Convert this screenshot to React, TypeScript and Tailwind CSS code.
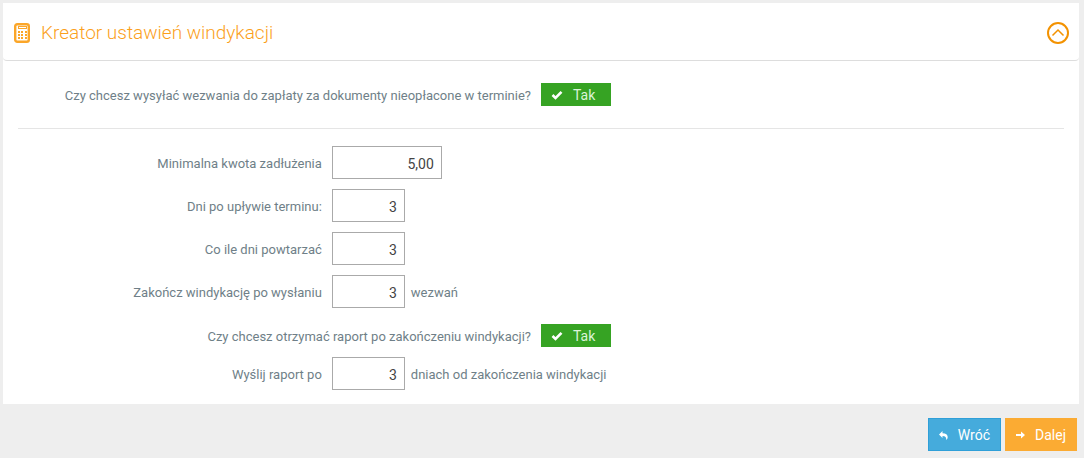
import { useState } from 'react'
import type { ReactNode } from 'react'

const numberFields = [
  { id: 'min-amount', label: 'Minimalna kwota zadłużenia', value: '5,00', wide: true },
  { id: 'days-after', label: 'Dni po upływie terminu:', value: '3' },
  { id: 'repeat-days', label: 'Co ile dni powtarzać', value: '3' },
  { id: 'finish-after', label: 'Zakończ windykację po wysłaniu', value: '3', suffix: 'wezwań' },
]

function CalculatorIcon() {
  return (
    <svg width="16" height="20" viewBox="0 0 16 20" aria-hidden="true" className="shrink-0">
      <rect x="1.2" y="1.2" width="13.6" height="17.6" rx="2" fill="#fff" stroke="#fba629" strokeWidth="2.4" />
      <rect x="4.5" y="3.5" width="8" height="2" fill="none" stroke="#fba629" />
      <g fill="#fba629">
        {[8, 11, 14].map((y) =>
          [4, 7, 11].map((x) => <rect key={`${x}-${y}`} x={x} y={y} width="2" height="2" />)
        )}
      </g>
    </svg>
  )
}

function Toggle({ id }: { id: string }) {
  const [on, setOn] = useState(true)

  return (
    <label className="relative flex h-[23px] w-[70px] cursor-pointer items-center gap-2.5 bg-[#36a323] pt-px pl-2.5 text-sm text-[#dcf3d8]">
      <input
        id={id}
        type="checkbox"
        checked={on}
        onChange={() => setOn(!on)}
        className="absolute inset-0 cursor-pointer opacity-0"
      />
      <svg width="12" height="10" viewBox="0 0 12 10" aria-hidden="true">
        <path d="M1.5 5 4.5 8 10.5 1.8" fill="none" stroke="#fff" strokeWidth="2.6" />
      </svg>
      <span>{on ? 'Tak' : 'Nie'}</span>
    </label>
  )
}

function ToggleRow({ id, children }: { id: string; children: ReactNode }) {
  return (
    <div className="flex items-center">
      <label htmlFor={id} className="w-1/2 pt-0.5 pr-2.5 text-right">
        {children}
      </label>
      <Toggle id={id} />
    </div>
  )
}

type NumberRowProps = { id: string; label: string; value: string; suffix?: string; wide?: boolean }

function NumberRow({ id, label, value, suffix, wide }: NumberRowProps) {
  return (
    <div className="flex items-center">
      <label htmlFor={id} className="w-[30%] pt-0.5 pr-2.5 text-right">
        {label}
      </label>
      <input
        id={id}
        type="text"
        defaultValue={value}
        className={`h-[33px] border border-[#aaa] bg-white px-[7px] pt-0.5 text-right text-sm text-[#444] ${wide ? 'w-[110px]' : 'w-[73px]'}`}
      />
      {suffix && <span className="pt-0.5 pl-1.5">{suffix}</span>}
    </div>
  )
}

export default function App() {
  const [open, setOpen] = useState(true)

  return (
    <main className="min-h-screen bg-[#eee] pt-[3px] pr-[5px] pl-[3px] font-['Roboto',sans-serif] text-[13px] leading-5 text-[#6f7f88]">
      <section className="bg-white">
        <header className="flex h-[58px] items-center justify-between rounded-b border-b border-[#ddd] pt-[3px] pr-2.5 pl-[11px]">
          <div className="flex items-center gap-[11px]">
            <CalculatorIcon />
            <h1 className="text-[19px] font-light text-[#fb9f1c]">Kreator ustawień windykacji</h1>
          </div>
          <button type="button" aria-label="Zwiń" aria-expanded={open} onClick={() => setOpen(!open)} className="cursor-pointer">
            <svg width="22" height="22" viewBox="0 0 22 22" fill="none" stroke="#f39200" className={open ? '' : 'rotate-180'}>
              <circle cx="11" cy="11" r="10" strokeWidth="2" />
              <path d="M5.5 13.5 11 8l5.5 5.5" strokeWidth="1.5" />
            </svg>
          </button>
        </header>

        {open && (
          <form className="px-[15px] pb-3.5">
            <div className="border-b border-[#e5e5e5] py-[22px]">
              <ToggleRow id="send-calls">
                Czy chcesz wysyłać wezwania do zapłaty za dokumenty nieopłacone w terminie?
              </ToggleRow>
            </div>
            <div className="flex flex-col gap-2.5 pt-[17px]">
              {numberFields.map((field) => (
                <NumberRow key={field.id} {...field} />
              ))}
              <div className="pt-1.5">
                <ToggleRow id="send-report">Czy chcesz otrzymać raport po zakończeniu windykacji?</ToggleRow>
              </div>
              <NumberRow id="report-after" label="Wyślij raport po" value="3" suffix="dniach od zakończenia windykacji" />
            </div>
          </form>
        )}
      </section>

      <footer className="flex justify-end gap-1 pt-3.5 pr-0.5 text-sm text-white">
        <button type="button" className="flex h-[33px] cursor-pointer items-center gap-2.5 border border-[#2f9fd8] bg-[#45abdc] px-2.5 pt-px">
          <svg width="9" height="9" viewBox="0 0 9 9" aria-hidden="true">
            <path d="M0 3.5 3.5 0v2.2C7 2.2 8.7 3.8 8.7 6c0 1.2-.5 2.2-1.5 3 .3-2.8-.8-4-3.7-4v2z" fill="#fff" />
          </svg>
          Wróć
        </button>
        <button type="button" className="flex h-[33px] cursor-pointer items-center gap-2.5 border border-[#fbab33] bg-[#fbab33] px-2.5 pt-px">
          <svg width="9" height="8" viewBox="0 0 9 8" aria-hidden="true">
            <path d="M0 3h5V.5L9 4 5 7.5V5H0z" fill="#fff" />
          </svg>
          Dalej
        </button>
      </footer>
    </main>
  )
}
